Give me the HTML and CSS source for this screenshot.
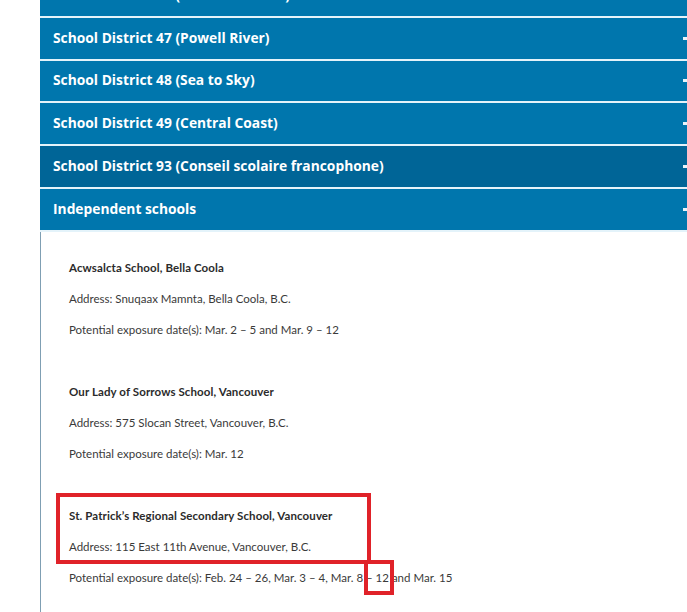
FILE: index.html
```html
<!DOCTYPE html>
<html>
<head>
<meta charset="utf-8">
<link rel="stylesheet" href="styles.css">
</head>
<body>
<div class="accordion">
  <div class="bar"><span>School District 46 (Sunshine Coast)</span><i class="minus"></i></div>
  <div class="bar"><span>School District 47 (Powell River)</span><i class="minus"></i></div>
  <div class="bar"><span>School District 48 (Sea to Sky)</span><i class="minus"></i></div>
  <div class="bar"><span>School District 49 (Central Coast)</span><i class="minus"></i></div>
  <div class="bar dark"><span>School District 93 (Conseil scolaire francophone)</span><i class="minus"></i></div>
  <div class="bar"><span>Independent schools</span><i class="minus"></i></div>
  <div class="panel">
    <div class="school">
      <p class="name">Acwsalcta School, Bella Coola</p>
      <p>Address: Snuqaax Mamnta, Bella Coola, B.C.</p>
      <p>Potential exposure date(s): Mar. 2 – 5 and Mar. 9 – 12</p>
    </div>
    <div class="school">
      <p class="name">Our Lady of Sorrows School, Vancouver</p>
      <p>Address: 575 Slocan Street, Vancouver, B.C.</p>
      <p>Potential exposure date(s): Mar. 12</p>
    </div>
    <div class="school">
      <p class="name">St. Patrick’s Regional Secondary School, Vancouver</p>
      <p>Address: 115 East 11th Avenue, Vancouver, B.C.</p>
      <p>Potential exposure date(s): Feb. 24 – 26, Mar. 3 – 4, Mar. 8 – 12 and Mar. 15</p>
    </div>
    <div class="mark mark-big"></div>
    <div class="mark mark-small"></div>
  </div>
</div>
</body>
</html>
```

FILE: styles.css
```css
html, body {
  margin: 0;
  padding: 0;
  overflow: hidden;
  background: #fff;
}
body {
  width: 687px;
  height: 612px;
}
.accordion {
  margin: -25px 0 0 40px;
}
.bar {
  height: 40.8px;
  box-sizing: content-box;
  background: #0076ad;
  border-bottom: 2px solid #e4f3fa;
  display: flex;
  align-items: center;
  justify-content: space-between;
  padding: 0 0 0 13px;
  color: #fff;
  font-family: "Open Sans", "Liberation Sans", sans-serif;
  font-weight: 700;
  font-size: 13.8px;
}
.bar span {
  margin-top: -2px;
}
.bar.dark {
  background: #006597;
}
.minus {
  display: block;
  flex: none;
  width: 12px;
  height: 3px;
  background: #e8f4fa;
  margin-right: -8px;
}
.panel {
  position: relative;
  border-left: 1px solid #7f9fb3;
  padding: 20px 0 40px 28px;
  color: #3a3a3a;
  font-family: "Lato", "Liberation Sans", sans-serif;
  font-size: 11.5px;
}
.school {
  margin-bottom: 31px;
}
.school p {
  margin: 0;
  line-height: 31px;
}
.school .name {
  font-weight: 700;
  color: #2b2b2b;
  letter-spacing: 0.1px;
}
.mark {
  position: absolute;
  border: 4px solid #e02229;
}
.mark-big {
  left: 15px;
  top: 261px;
  width: 307px;
  height: 63px;
}
.mark-small {
  left: 323px;
  top: 328px;
  width: 22px;
  height: 27px;
}
```
